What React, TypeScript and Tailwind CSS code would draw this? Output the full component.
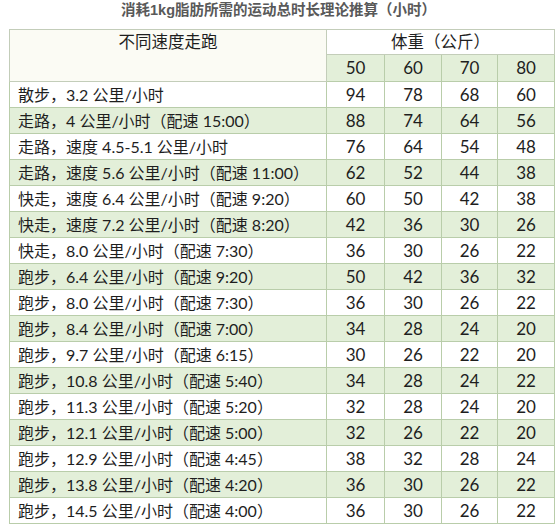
import React from "react"

type Row = { label: string; values: number[] }

const rows: Row[] = [
    { label: "散步，3.2 公里/小时", values: [94, 78, 68, 60] },
    { label: "走路，4 公里/小时（配速 15:00）", values: [88, 74, 64, 56] },
    { label: "走路，速度 4.5-5.1 公里/小时", values: [76, 64, 54, 48] },
    { label: "走路，速度 5.6 公里/小时（配速 11:00）", values: [62, 52, 44, 38] },
    { label: "快走，速度 6.4 公里/小时（配速 9:20）", values: [60, 50, 42, 38] },
    { label: "快走，速度 7.2 公里/小时（配速 8:20）", values: [42, 36, 30, 26] },
    { label: "快走，8.0 公里/小时（配速 7:30）", values: [36, 30, 26, 22] },
    { label: "跑步，6.4 公里/小时（配速 9:20）", values: [50, 42, 36, 32] },
    { label: "跑步，8.0 公里/小时（配速 7:30）", values: [36, 30, 26, 22] },
    { label: "跑步，8.4 公里/小时（配速 7:00）", values: [34, 28, 24, 20] },
    { label: "跑步，9.7 公里/小时（配速 6:15）", values: [30, 26, 22, 20] },
    { label: "跑步，10.8 公里/小时（配速 5:40）", values: [34, 28, 24, 22] },
    { label: "跑步，11.3 公里/小时（配速 5:20）", values: [32, 28, 24, 20] },
    { label: "跑步，12.1 公里/小时（配速 5:00）", values: [32, 26, 22, 20] },
    { label: "跑步，12.9 公里/小时（配速 4:45）", values: [38, 32, 28, 24] },
    { label: "跑步，13.8 公里/小时（配速 4:20）", values: [36, 30, 26, 22] },
    { label: "跑步，14.5 公里/小时（配速 4:00）", values: [36, 30, 26, 22] },
]

const weights = [50, 60, 70, 80]

export default function App() {
    return (
        <div className="w-[557px] h-[524px] bg-white pl-[9px] pr-[3px] font-['Lato','Noto_Sans_CJK_SC',sans-serif] text-[#1e1e1e]">
            <h1 className="h-[29px] pt-[1px] text-center text-[14.5px] font-bold leading-[18px] text-[#595959] pr-[6px] font-['Liberation_Sans','Noto_Sans_CJK_SC',sans-serif]">
                消耗1kg脂肪所需的运动总时长理论推算（小时）
            </h1>
            <table className="w-[545px] border-collapse table-fixed text-[16px]">
                <colgroup>
                    <col className="w-[317px]" />
                    <col className="w-[58px]" />
                    <col className="w-[57px]" />
                    <col className="w-[56px]" />
                    <col className="w-[57px]" />
                </colgroup>
                <thead>
                    <tr className="h-[25px]">
                        <th rowSpan={2} className="align-top pt-[1px] font-normal leading-[22px] bg-[#fbfbf4] border border-[#c3cdb9] text-[16.5px]">
                            不同速度走跑
                        </th>
                        <th colSpan={4} className="font-normal leading-[22px] bg-white border border-[#c3cdb9] text-[16.5px]">
                            体重（公斤）
                        </th>
                    </tr>
                    <tr className="h-[27px]">
                        {weights.map(w => (
                            <th key={w} className="font-normal text-[17px] leading-[22px] bg-[#e3efd9] border border-[#b9cdaa]">
                                {w}
                            </th>
                        ))}
                    </tr>
                </thead>
                <tbody>
                    {rows.map((r, i) => (
                        <tr key={i} className={`h-[26px] ${i % 2 === 1 ? "bg-[#e3efd9]" : "bg-white"}`}>
                            <td className="pl-[8px] leading-[22px] whitespace-nowrap border border-[#b9cdaa]">{r.label}</td>
                            {r.values.map((v, j) => (
                                <td key={j} className="text-center text-[17px] leading-[22px] border border-[#b9cdaa]">{v}</td>
                            ))}
                        </tr>
                    ))}
                </tbody>
            </table>
        </div>
    )
}
